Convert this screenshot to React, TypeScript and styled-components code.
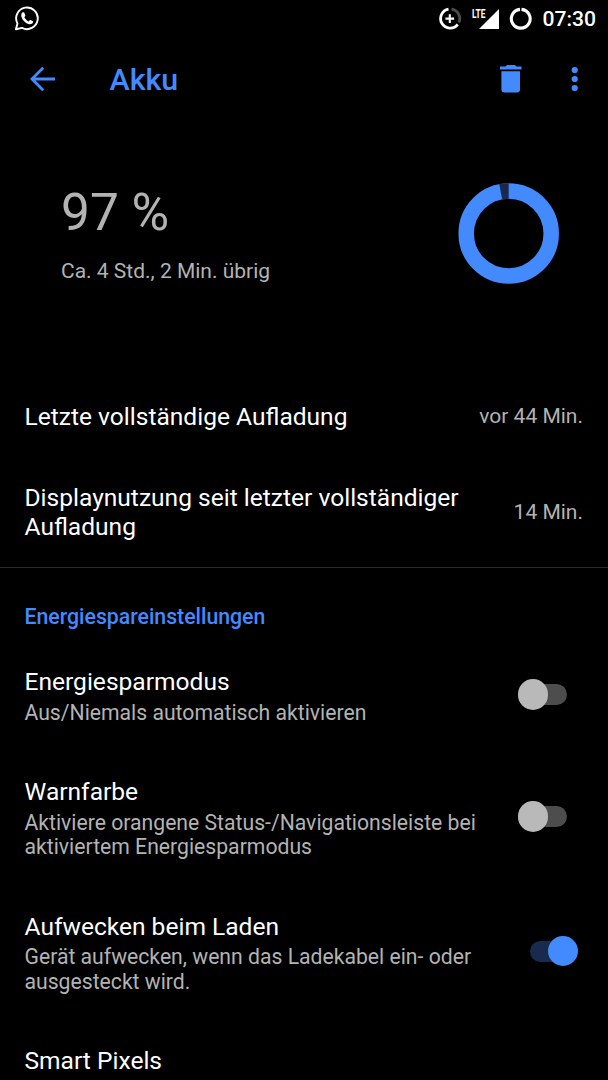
import React from 'react';
import styled, { createGlobalStyle } from 'styled-components';

const BLUE = '#448aff';
const BLUE_DIM = '#182b4f';
const GREY = '#b3b3b3';

const GlobalStyle = createGlobalStyle`
  html, body { margin: 0; background: #000; }
  body { font-family: Roboto, "Noto Sans", sans-serif; }
  * { box-sizing: border-box; }
`;

const Screen = styled.main`
  width: 608px;
  height: 1080px;
  overflow: hidden;
  background: #000;
  color: #fff;
  display: flex;
  flex-direction: column;

  > * {
    flex-shrink: 0;
  }
`;

const StatusBar = styled.header`
  height: 37px;
  padding: 0 12px 0 14px;
  display: flex;
  justify-content: space-between;
  align-items: center;
`;

const StatusIcons = styled.div`
  display: flex;
  align-items: center;
`;

const StatusIcon = styled.svg<{ $gap?: number }>`
  display: block;
  margin-right: ${(p) => p.$gap ?? 0}px;
`;

const Signal = styled.div`
  display: flex;
  align-items: flex-start;
  width: 27px;
  height: 22px;
  margin-right: 10.5px;
`;

const NetworkType = styled.span`
  width: 14px;
  font-family: Roboto, sans-serif;
  font-size: 13.5px;
  font-weight: 700;
  line-height: 10px;
  transform: scaleX(0.62);
  transform-origin: 0 0;
`;

const SignalWedge = styled.svg`
  display: block;
  flex-shrink: 0;
  margin: 1px 0 0 -7px;
`;

const Clock = styled.span`
  font-size: 21.1px;
  font-weight: 500;
  line-height: 37px;
`;

const AppBar = styled.nav`
  height: 85px;
  padding: 0 20px 0 30px;
  display: flex;
  align-items: center;
`;

const BarIcon = styled.svg`
  display: block;
  margin-bottom: 2px;
`;

const AppTitle = styled.h1`
  margin: 0 auto 0 53.5px;
  padding-top: 1px;
  font-size: 30.4px;
  font-weight: 500;
  line-height: 36px;
  color: ${BLUE};
`;

const Actions = styled.div`
  display: flex;
  align-items: center;
  gap: 40.5px;
`;

const Summary = styled.section`
  height: 253px;
  padding: 61px 48.5px 0 61px;
  display: flex;
  justify-content: space-between;
  align-items: flex-start;
`;

const Percent = styled.div`
  font-size: 51.4px;
  line-height: 60px;
  color: ${GREY};
`;

const Remaining = styled.div`
  margin-top: 16px;
  font-size: 21px;
  line-height: 25px;
  color: ${GREY};
`;

const UsageRow = styled.div<{ $height: number }>`
  height: ${(p) => p.$height}px;
  padding: 0 25px 0 24.5px;
  display: flex;
  align-items: center;
  justify-content: space-between;
`;

const Label = styled.div`
  max-width: 450px;
  padding-top: 1px;
  font-size: 24.55px;
  line-height: 28.7px;
`;

const UsageLabel = styled(Label)`
  padding-top: 2px;
`;

const Value = styled.div`
  font-size: 21px;
  line-height: 25px;
  color: ${GREY};
`;

const Category = styled.h2`
  height: 72px;
  margin: 0;
  padding: 36px 24.5px 0;
  border-top: 1px solid #2a2a2a;
  font-size: 21.25px;
  font-weight: 500;
  line-height: 25px;
  color: ${BLUE};
`;

const SettingRow = styled.div<{ $height: number }>`
  height: ${(p) => p.$height}px;
  padding: 28px 29.7px 28px 24.5px;
  display: flex;
  align-items: flex-start;
  justify-content: space-between;
`;

const SettingText = styled.div`
  width: 470px;
`;

const Description = styled.div`
  margin-top: 4px;
  font-size: 21.18px;
  line-height: 24.5px;
  color: ${GREY};
`;

const SwitchBox = styled.span<{ $on: boolean }>`
  align-self: center;
  position: relative;
  display: flex;
  align-items: center;
  justify-content: center;
  width: 60.5px;
  height: 30.5px;
  margin-top: 0.5px;

  &::before {
    content: '';
    width: 37px;
    height: 21px;
    border-radius: 11px;
    background: ${(p) => (p.$on ? BLUE_DIM : '#4d4d4d')};
  }

  &::after {
    content: '';
    position: absolute;
    top: 0;
    ${(p) => (p.$on ? 'right' : 'left')}: 0;
    width: 30.5px;
    height: 30.5px;
    border-radius: 50%;
    background: ${(p) => (p.$on ? BLUE : '#b9b9b9')};
  }
`;

type Setting = {
  title: string;
  lines: string[];
  on?: boolean;
  height: number;
};

const settings: Setting[] = [
  { title: 'Energiesparmodus', lines: ['Aus/Niemals automatisch aktivieren'], on: false, height: 110 },
  {
    title: 'Warnfarbe',
    lines: ['Aktiviere orangene Status-/Navigationsleiste bei', 'aktiviertem Energiesparmodus'],
    on: false,
    height: 134.5,
  },
  {
    title: 'Aufwecken beim Laden',
    lines: ['Gerät aufwecken, wenn das Ladekabel ein- oder', 'ausgesteckt wird.'],
    on: true,
    height: 134.5,
  },
  { title: 'Smart Pixels', lines: [], height: 110 },
];

export default function App() {
  return (
    <Screen>
      <GlobalStyle />
      <StatusBar>
        <StatusIcon width="26" height="26" viewBox="0 0 26 26" fill="none">
          <path
            d="M1.900 23.300 3.500 17.500A10.800 10.800 0 1 1 8 21.900Z"
            stroke="#fff"
            strokeWidth="1.900"
            strokeLinejoin="round"
          />
          <path
            d="M7.500 7.800C8.200 6.200 9.700 6 10.300 6.800L11.300 9.300C11.500 10 11 10.600 10.300 11.300 11.300 13.300 12.800 14.600 14.800 15.400 15.600 14.500 16 14 16.600 14.100L18.900 15.200C19.400 15.700 19 17.100 17.800 17.800 16.100 18.700 13.900 18.100 11.800 16.700 8.800 14.700 6.500 10.800 7.500 7.800Z"
            fill="#fff"
          />
        </StatusIcon>
        <StatusIcons>
          <StatusIcon width="24" height="24" viewBox="0 0 24 24" fill="none" $gap={9.5}>
            <path d="M13.500 2.200A9.500 9.500 0 0 1 20.900 15.500" stroke="#4d4d4d" strokeWidth="2.800" />
            <path d="M10.500 2.200A9.500 9.500 0 1 0 19.700 17.300" stroke="#fff" strokeWidth="2.800" />
            <path d="M11.800 7.300v8.600M7.500 11.600h8.600" stroke="#fff" strokeWidth="2.100" />
          </StatusIcon>
          <Signal>
            <NetworkType>LTE</NetworkType>
            <SignalWedge width="20" height="20" viewBox="0 0 20 20">
              <path d="M20 0v20H0Z" fill="#fff" />
            </SignalWedge>
          </Signal>
          <StatusIcon width="24" height="24" viewBox="0 0 24 24" fill="none" $gap={9}>
            <path d="M12.500 2.400A9.400 9.400 0 1 1 11 2.400" stroke="#fff" strokeWidth="3.100" />
          </StatusIcon>
          <Clock>07:30</Clock>
        </StatusIcons>
      </StatusBar>

      <AppBar>
        <BarIcon width="26" height="26" viewBox="0 0 26 26" fill="none">
          <path d="M25 13H2.500M13.200 1.800 2 13l11.200 11.200" stroke={BLUE} strokeWidth="2.800" />
        </BarIcon>
        <AppTitle>Akku</AppTitle>
        <Actions>
          <BarIcon width="22" height="28" viewBox="0 0 22 28" fill={BLUE}>
            <path d="M0 1.600H5.500L7 0h8l1.500 1.600H21.500V4.600H0Z" />
            <path d="M1.400 6.200H20V24.500a3 3 0 0 1-3 3H4.400a3 3 0 0 1-3-3Z" />
          </BarIcon>
          <BarIcon width="26" height="26" viewBox="0 0 26 26" fill={BLUE}>
            <circle cx="12.700" cy="4" r="3.100" />
            <circle cx="12.700" cy="13" r="3.100" />
            <circle cx="12.700" cy="22" r="3.100" />
          </BarIcon>
        </Actions>
      </AppBar>

      <Summary>
        <div>
          <Percent>97 %</Percent>
          <Remaining>Ca. 4 Std., 2 Min. übrig</Remaining>
        </div>
        <svg width="102" height="102" viewBox="0 0 102 102" fill="none">
          <circle cx="50.700" cy="50.500" r="42.500" stroke={BLUE} strokeWidth="15.500" />
          <path d="M42.730 8.750A42.500 42.500 0 0 1 50.700 8" stroke={BLUE_DIM} strokeWidth="15.600" />
        </svg>
      </Summary>

      <UsageRow $height={82}>
        <UsageLabel>Letzte vollständige Aufladung</UsageLabel>
        <Value>vor 44 Min.</Value>
      </UsageRow>
      <UsageRow $height={110}>
        <UsageLabel>Displaynutzung seit letzter vollständiger Aufladung</UsageLabel>
        <Value>14 Min.</Value>
      </UsageRow>

      <Category>Energiespareinstellungen</Category>
      {settings.map((s) => (
        <SettingRow key={s.title} $height={s.height}>
          <SettingText>
            <Label>{s.title}</Label>
            <Description>
              {s.lines.map((line) => (
                <div key={line}>{line}</div>
              ))}
            </Description>
          </SettingText>
          {s.on !== undefined && <SwitchBox $on={s.on} />}
        </SettingRow>
      ))}
    </Screen>
  );
}
